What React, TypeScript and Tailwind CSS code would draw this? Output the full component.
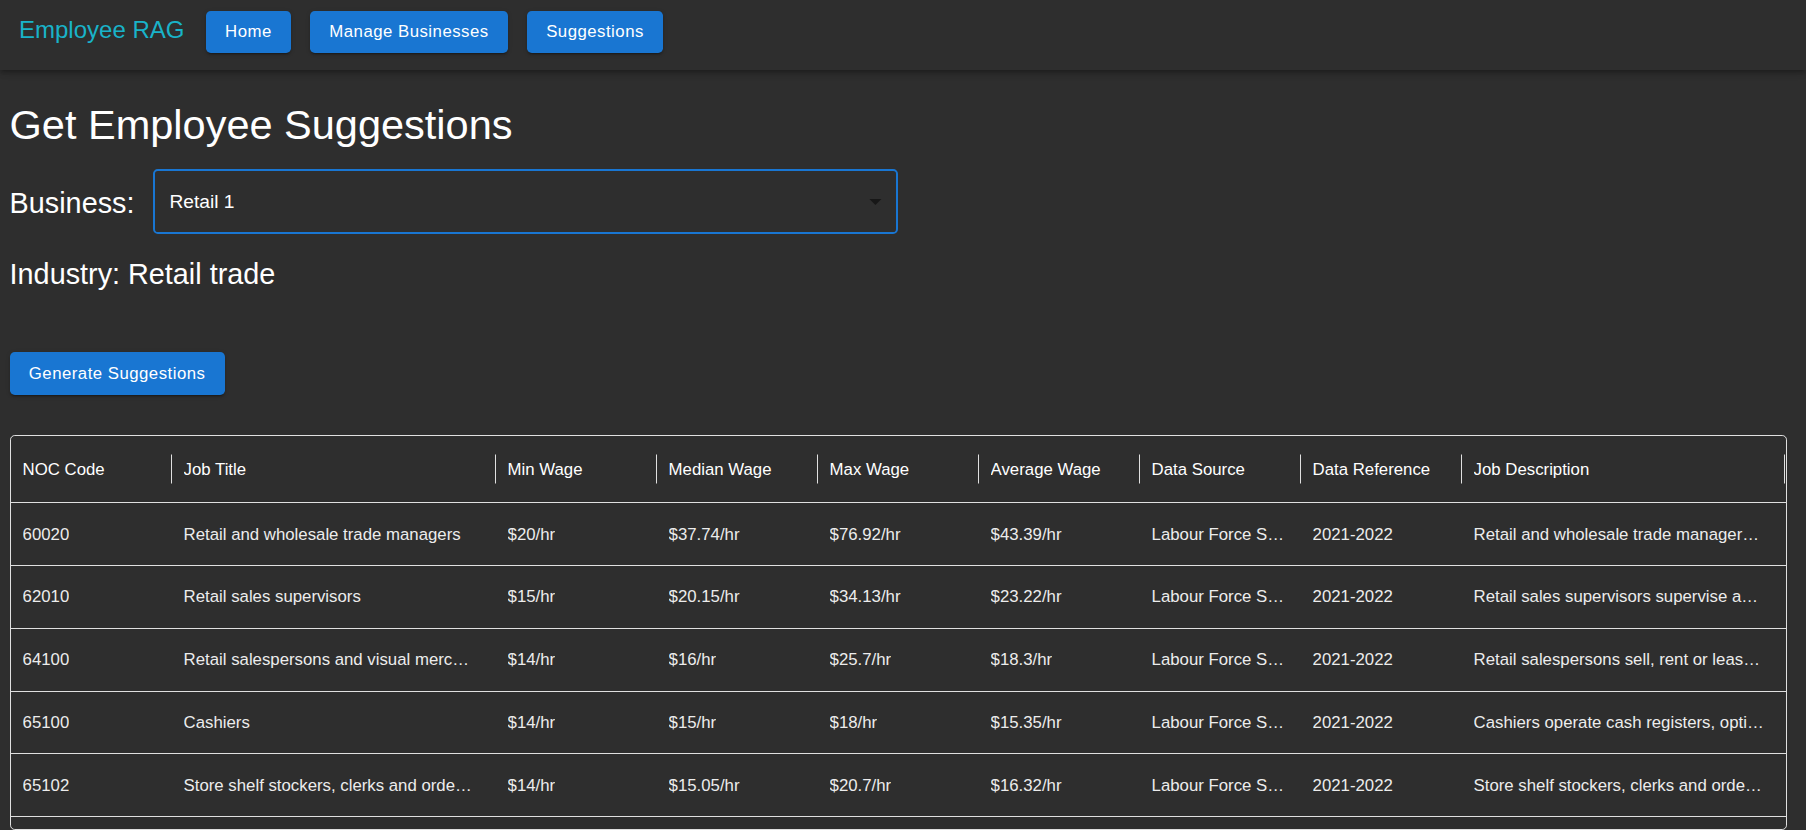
import React from "react";

type Row = {
  noc: string;
  title: string;
  min: string;
  median: string;
  max: string;
  avg: string;
  source: string;
  ref: string;
  desc: string;
};

const rows: Row[] = [
  {
    noc: "60020",
    title: "Retail and wholesale trade managers",
    min: "$20/hr",
    median: "$37.74/hr",
    max: "$76.92/hr",
    avg: "$43.39/hr",
    source: "Labour Force Survey",
    ref: "2021-2022",
    desc: "Retail and wholesale trade managers plan, organize, direct, control and evaluate the operations",
  },
  {
    noc: "62010",
    title: "Retail sales supervisors",
    min: "$15/hr",
    median: "$20.15/hr",
    max: "$34.13/hr",
    avg: "$23.22/hr",
    source: "Labour Force Survey",
    ref: "2021-2022",
    desc: "Retail sales supervisors supervise and co-ordinate the activities of workers",
  },
  {
    noc: "64100",
    title: "Retail salespersons and visual merchandisers",
    min: "$14/hr",
    median: "$16/hr",
    max: "$25.7/hr",
    avg: "$18.3/hr",
    source: "Labour Force Survey",
    ref: "2021-2022",
    desc: "Retail salespersons sell, rent or lease a range of technical and non-technical goods",
  },
  {
    noc: "65100",
    title: "Cashiers",
    min: "$14/hr",
    median: "$15/hr",
    max: "$18/hr",
    avg: "$15.35/hr",
    source: "Labour Force Survey",
    ref: "2021-2022",
    desc: "Cashiers operate cash registers, optical price scanners, computers or other equipment",
  },
  {
    noc: "65102",
    title: "Store shelf stockers, clerks and order fillers",
    min: "$14/hr",
    median: "$15.05/hr",
    max: "$20.7/hr",
    avg: "$16.32/hr",
    source: "Labour Force Survey",
    ref: "2021-2022",
    desc: "Store shelf stockers, clerks and order fillers unpack, price and stock shelves",
  },
  {
    noc: "65200",
    title: "Food and beverage servers",
    min: "$14/hr",
    median: "$15/hr",
    max: "$19/hr",
    avg: "$15.80/hr",
    source: "Labour Force Survey",
    ref: "2021-2022",
    desc: "Food and beverage servers take patrons' food and beverage orders",
  },
];

const columns: { key: keyof Row; label: string; w: string }[] = [
  { key: "noc", label: "NOC Code", w: "w-[161px] pr-[12px]" },
  { key: "title", label: "Job Title", w: "w-[324px] pr-[20px]" },
  { key: "min", label: "Min Wage", w: "w-[161px] pr-[12px]" },
  { key: "median", label: "Median Wage", w: "w-[161px] pr-[12px]" },
  { key: "max", label: "Max Wage", w: "w-[161px] pr-[12px]" },
  { key: "avg", label: "Average Wage", w: "w-[161px] pr-[12px]" },
  { key: "source", label: "Data Source", w: "w-[161px] pr-[12px]" },
  { key: "ref", label: "Data Reference", w: "w-[161px] pr-[12px]" },
  { key: "desc", label: "Job Description", w: "w-[323px] pr-[20px]" },
];

function NavButton({ children }: { children: React.ReactNode }) {
  return (
    <button className="flex h-[42px] items-center justify-center rounded-[4.8px] bg-[#1976d2] px-[19.2px] text-[16.8px] tracking-[0.02857em] text-white shadow-[0_3px_1px_-2px_rgba(0,0,0,0.2),0_2px_2px_0_rgba(0,0,0,0.14),0_1px_5px_0_rgba(0,0,0,0.12)]">
      {children}
    </button>
  );
}

export default function App() {
  return (
    <div
      className="flex h-screen flex-col overflow-hidden bg-[#2e2e2e] text-white"
      style={{ fontFamily: '"Liberation Sans", Arial, sans-serif' }}
    >
      <header className="relative z-10 flex h-[70px] shrink-0 items-start bg-[#2e2e2e] pl-[19px] pt-[11px] shadow-[0_2px_4px_-1px_rgba(0,0,0,0.2),0_4px_5px_0_rgba(0,0,0,0.14),0_1px_10px_0_rgba(0,0,0,0.12)]">
        <div className="mt-[7px] text-[24px] leading-[24px] text-[#19b3c9]">Employee RAG</div>
        <div className="ml-[21.5px] flex gap-[19.2px]">
          <NavButton>Home</NavButton>
          <NavButton>Manage Businesses</NavButton>
          <NavButton>Suggestions</NavButton>
        </div>
      </header>

      <main className="flex min-h-0 flex-1 flex-col pl-[9.6px] pr-[19px]">
        <h1 className="mt-[30px] text-[41.5px] leading-[1.2]">Get Employee Suggestions</h1>

        <div className="mt-[19.5px] flex h-[65px] items-center">
          <span className="pt-[2px] text-[28.8px] leading-[1.2]">Business:</span>
          <div className="ml-[18.5px] flex h-[65px] w-[745px] items-center justify-between rounded-[4.8px] border-2 border-[#1976d2] pl-[14.5px] pr-[6px]">
            <span className="text-[19.2px] leading-[1.2] text-white">Retail 1</span>
            <svg width="28.8" height="28.8" viewBox="0 0 24 24" className="text-[#171717]">
              <path d="M7 10l5 5 5-5z" fill="currentColor" />
            </svg>
          </div>
        </div>

        <div className="mt-[22.7px] text-[28.8px] leading-[1.2]">Industry: Retail trade</div>

        <div className="mt-[60.7px]">
          <button className="flex h-[43px] items-center justify-center rounded-[4.8px] bg-[#1976d2] px-[19.2px] text-[16.8px] tracking-[0.02857em] text-white shadow-[0_3px_1px_-2px_rgba(0,0,0,0.2),0_2px_2px_0_rgba(0,0,0,0.14),0_1px_5px_0_rgba(0,0,0,0.12)]">
            Generate Suggestions
          </button>
        </div>

        <div className="mt-[40px] flex-1 overflow-hidden rounded-[4.8px] border border-[#e0e0e0]">
          <div className="flex h-[67px] border-b border-[#e0e0e0]">
            {columns.map((c) => (
              <div key={c.key} className={`relative flex shrink-0 items-center pl-[12px] ${c.w}`}>
                <span className="truncate text-[16.8px] text-white">{c.label}</span>
                <div className="absolute right-0 top-1/2 h-[29px] w-px -translate-y-1/2 bg-[#e0e0e0]" />
              </div>
            ))}
          </div>
          {rows.map((r) => (
            <div key={r.noc} className="flex h-[62.8px] border-b border-[#e0e0e0]">
              {columns.map((c) => (
                <div key={c.key} className={`flex shrink-0 items-center pl-[12px] ${c.w}`}>
                  <span className="truncate text-[16.8px] text-[#ececec]">{r[c.key]}</span>
                </div>
              ))}
            </div>
          ))}
        </div>
      </main>
    </div>
  );
}
